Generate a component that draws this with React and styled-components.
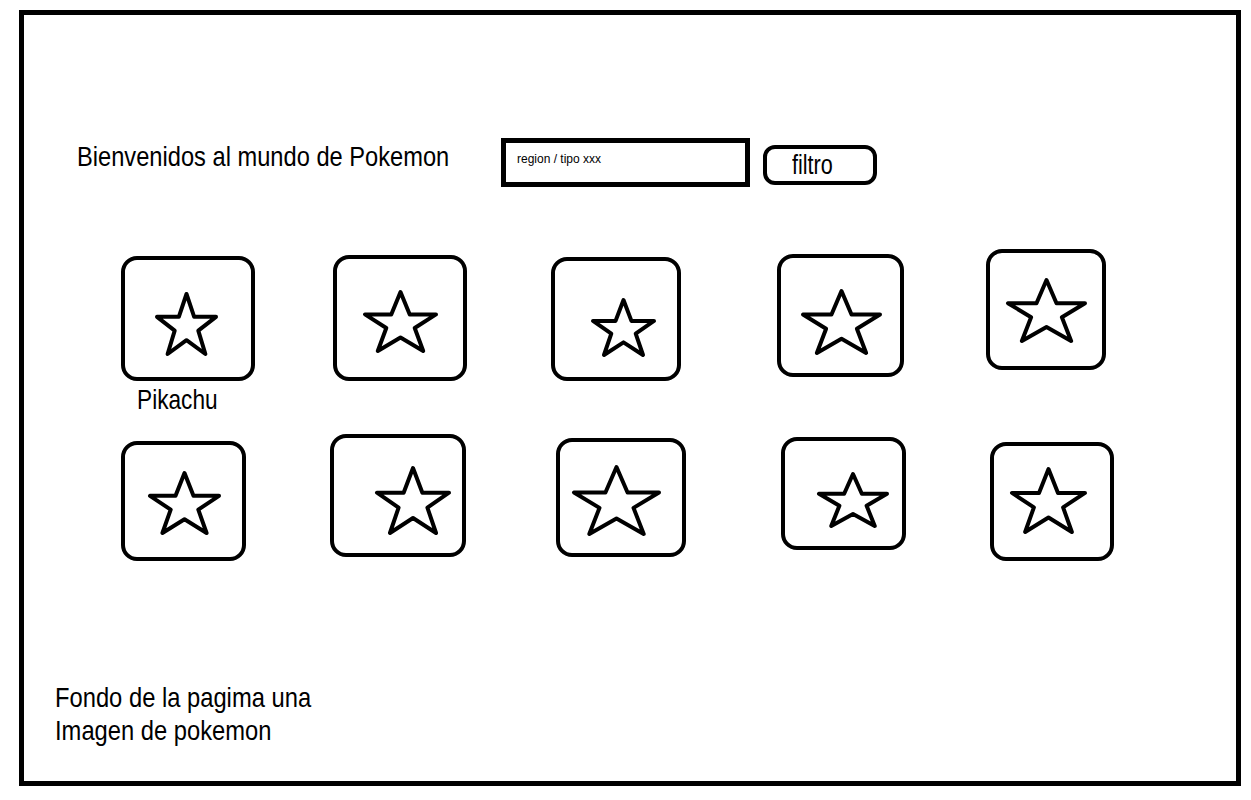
import styled, { createGlobalStyle } from 'styled-components';

const GlobalStyle = createGlobalStyle`
  body {
    margin: 0;
    background: #ffffff;
    font-family: 'Liberation Sans', Arial, sans-serif;
    color: #000000;
  }
`;

// the sketch text is a squeezed arial, so every label is scaled on x
const topRow = [
  { ml: 97, mt: 7, w: 134, h: 125, sw: 59, sh: 60, dx: -1.5, dy: 5.5, label: 'Pikachu' },
  { ml: 78, mt: 6, w: 134, h: 126, sw: 71, sh: 59, dx: 0, dy: 3.5 },
  { ml: 84, mt: 8, w: 130, h: 124, sw: 61, sh: 55, dx: 7.5, dy: 8.5 },
  { ml: 96, mt: 5, w: 127, h: 123, sw: 77, sh: 62, dx: 1, dy: 6.5 },
  { ml: 82, mt: 0, w: 120, h: 121, sw: 77, sh: 61, dx: 0.5, dy: 1 },
];

const bottomRow = [
  { ml: 97, mt: 7, w: 125, h: 120, sw: 69, sh: 60, dx: 1, dy: 2 },
  { ml: 84, mt: 0, w: 136, h: 123, sw: 72, sh: 65, dx: 15, dy: 5 },
  { ml: 90, mt: 4, w: 130, h: 119, sw: 85, sh: 67, dx: -4.5, dy: 3 },
  { ml: 95, mt: 3, w: 125, h: 113, sw: 68, sh: 52, dx: 9.5, dy: 6.5 },
  { ml: 84, mt: 8, w: 124, h: 119, sw: 73, sh: 63, dx: -3.5, dy: -1 },
];

const StarIcon = ({ w, h, dx, dy }) => (
  <StyledStar
    $dx={dx}
    $dy={dy}
    width={w}
    height={h}
    viewBox="0 0 100 100"
    preserveAspectRatio="none">
    <polygon
      points="50,0 63,38 100,38 70,61 82,100 50,77 18,100 30,61 0,38 37,38"
      fill="none"
      stroke="#000"
      strokeWidth="4"
      strokeLinejoin="round"
      vectorEffect="non-scaling-stroke"
    />
  </StyledStar>
);

const CardRow = ({ items, height, top }) => (
  <StyledRow $h={height} $top={top}>
    {items.map((item, i) => (
      <StyledSlot key={i} $ml={item.ml} $mt={item.mt}>
        <StyledCard $w={item.w} $h={item.h}>
          <StarIcon w={item.sw} h={item.sh} dx={item.dx} dy={item.dy} />
        </StyledCard>
        {item.label && <StyledName>{item.label}</StyledName>}
      </StyledSlot>
    ))}
  </StyledRow>
);

const App = () => {
  return (
    <>
      <GlobalStyle />
      <StyledFrame>
        <StyledHeader>
          <StyledTitleBox>
            <StyledTitle>Bienvenidos al mundo de Pokemon</StyledTitle>
          </StyledTitleBox>
          <StyledSearch>region / tipo xxx</StyledSearch>
          <StyledButton>
            <StyledButtonText>filtro</StyledButtonText>
          </StyledButton>
        </StyledHeader>
        <CardRow items={topRow} height={185} top={62} />
        <CardRow items={bottomRow} height={130} top={0} />
        <StyledFooter>
          <StyledFooterLine>Fondo de la pagima una</StyledFooterLine>
          <StyledFooterLine>Imagen de pokemon</StyledFooterLine>
        </StyledFooter>
      </StyledFrame>
    </>
  );
};

const StyledFrame = styled.div`
  box-sizing: border-box;
  width: 1222px;
  height: 776px;
  margin: 10px 0 0 19px;
  border: 5px solid #000;
  display: flex;
  flex-direction: column;
`;

const StyledHeader = styled.div`
  display: flex;
  align-items: flex-start;
  margin-top: 123px;
  height: 49px;
`;

const StyledTitleBox = styled.div`
  width: 424px;
  margin: 5px 0 0 53px;
`;

const StyledTitle = styled.div`
  font-size: 28px;
  line-height: 28px;
  white-space: nowrap;
  transform: scaleX(0.845);
  transform-origin: left center;
`;

const StyledSearch = styled.div`
  box-sizing: border-box;
  width: 249px;
  height: 49px;
  padding: 9px 0 0 11px;
  border: 5px solid #000;
  font-size: 12px;
  line-height: 14px;
  white-space: nowrap;
`;

const StyledButton = styled.button`
  box-sizing: border-box;
  width: 114px;
  height: 40px;
  margin: 7px 0 0 13px;
  padding: 0 0 0 25px;
  border: 4px solid #000;
  border-radius: 12px;
  background: #fff;
  color: #000;
  text-align: left;
  font-family: 'Liberation Sans', Arial, sans-serif;
  font-size: 27px;
  line-height: 30px;
`;

const StyledButtonText = styled.span`
  display: inline-block;
  transform: scaleX(0.8);
  transform-origin: left center;
`;

const StyledRow = styled.div`
  display: flex;
  align-items: flex-start;
  height: ${(p) => p.$h}px;
  margin-top: ${(p) => p.$top}px;
`;

const StyledSlot = styled.div`
  display: flex;
  flex-direction: column;
  margin-left: ${(p) => p.$ml}px;
  margin-top: ${(p) => p.$mt}px;
`;

const StyledCard = styled.div`
  box-sizing: border-box;
  width: ${(p) => p.$w}px;
  height: ${(p) => p.$h}px;
  border: 4px solid #000;
  border-radius: 16px;
  display: flex;
  align-items: center;
  justify-content: center;
`;

const StyledStar = styled.svg`
  overflow: visible;
  flex-shrink: 0;
  margin-left: ${(p) => p.$dx * 2}px;
  margin-top: ${(p) => p.$dy * 2}px;
`;

const StyledName = styled.div`
  margin: 5px 0 0 16px;
  font-size: 28px;
  line-height: 28px;
  white-space: nowrap;
  transform: scaleX(0.81);
  transform-origin: left center;
`;

const StyledFooter = styled.div`
  margin-top: auto;
  padding: 0 0 34px 31px;
  display: flex;
  flex-direction: column;
`;

const StyledFooterLine = styled.div`
  font-size: 28px;
  line-height: 33px;
  white-space: nowrap;
  transform: scaleX(0.848);
  transform-origin: left center;
`;

export default App;
